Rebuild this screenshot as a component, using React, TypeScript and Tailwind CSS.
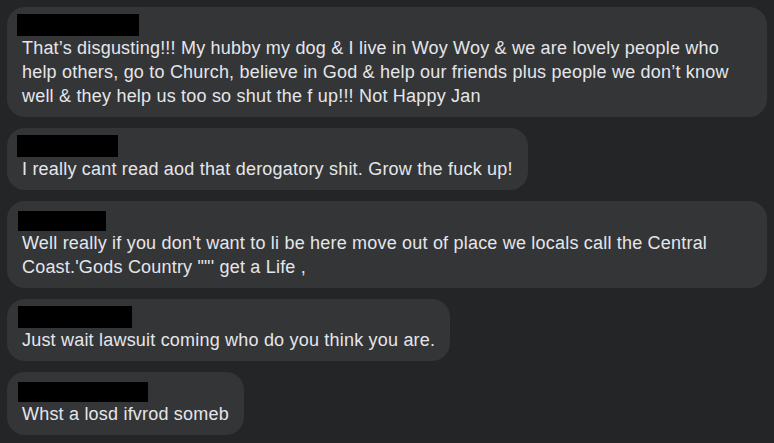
const comments = [
  {
    id: 1,
    nameBox: "w-[122px] h-[22px]",
    text: "That’s disgusting!!! My hubby my dog & I live in Woy Woy & we are lovely people who help others, go to Church, believe in God & help our friends plus people we don’t know well & they help us too so shut the f up!!! Not Happy Jan",
  },
  {
    id: 2,
    nameBox: "w-[101px] h-[22px]",
    text: "I really cant read aod that derogatory shit. Grow the fuck up!",
  },
  {
    id: 3,
    nameBox: "w-[88px] h-[20px] mt-[3px] ml-[1px]",
    text: "Well really if you don't want to li be here move out of place we locals call the Central Coast.'Gods Country \"\"' get a Life ,",
  },
  {
    id: 4,
    nameBox: "w-[114px] h-[22px] ml-[1px]",
    text: "Just wait lawsuit coming who do you think you are.",
  },
  {
    id: 5,
    nameBox: "w-[130px] h-[20px] mt-[3px] ml-[1px]",
    text: "Whst a losd ifvrod someb",
  },
];

export default function App() {
  return (
    <div className="min-h-[443px] w-[774px] bg-[#242526] px-[7px] pt-[7px] font-['Liberation_Sans',Arial,sans-serif]">
      <div className="flex flex-col items-start gap-[11px]">
        {comments.map((c) => (
          <div
            key={c.id}
            className="w-fit max-w-full rounded-[18px] bg-[#343536] pb-[9px] pl-[10px] pr-[15px] pt-[7px]"
          >
            <div className={`bg-black ${c.nameBox}`}></div>
            <p className="pl-[5px] text-[18px] leading-[24px] tracking-[0.2px] text-[#e4e6eb]">{c.text}</p>
          </div>
        ))}
      </div>
    </div>
  );
}
